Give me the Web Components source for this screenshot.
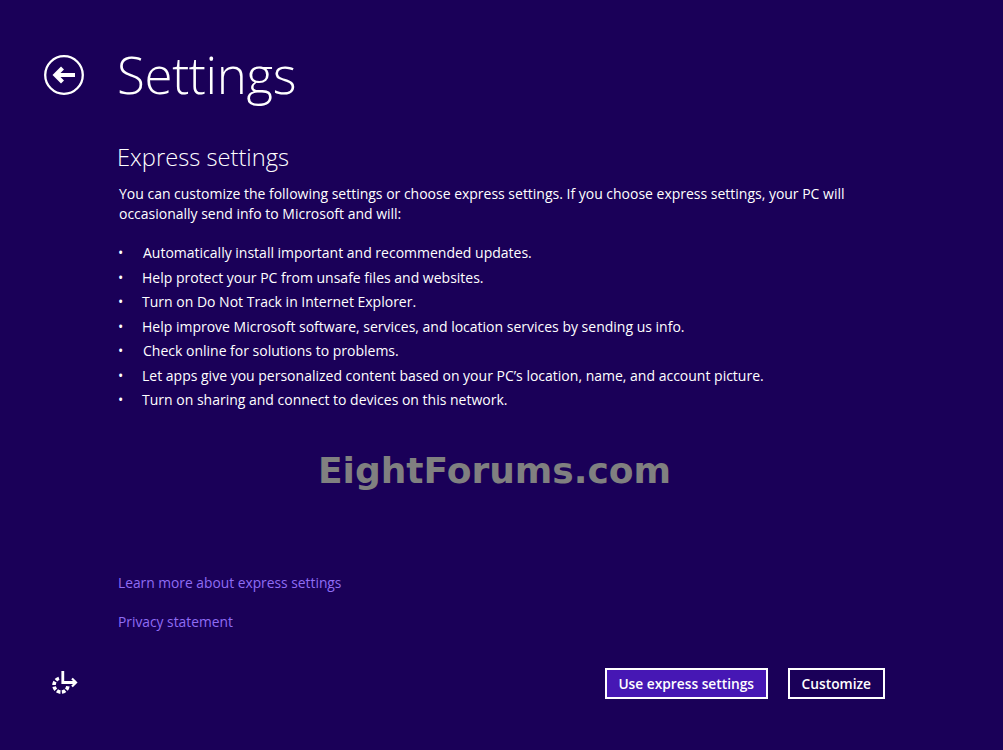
<!DOCTYPE html>
<html><head><meta charset="utf-8"><title>Settings</title>
<style>
html,body{margin:0;height:100%;background:#1a0058}
body{font-family:"Open Sans","Noto Sans",sans-serif;color:#fff;overflow:hidden}
</style></head><body>
<oobe-page>
<oobe-header slot="header" title-text="Settings"></oobe-header>
<h2-heading slot="main">Express settings</h2-heading>
<body-text slot="main">You can customize the following settings or choose express settings. If you choose express settings, your PC will<br>occasionally send info to Microsoft and will:</body-text>
<bullet-list slot="main">
<bullet-item indent="1">Automatically install important and recommended updates.</bullet-item>
<bullet-item>Help protect your PC from unsafe files and websites.</bullet-item>
<bullet-item>Turn on Do Not Track in Internet Explorer.</bullet-item>
<bullet-item>Help improve Microsoft software, services, and location services by sending us info.</bullet-item>
<bullet-item indent="1">Check online for solutions to problems.</bullet-item>
<bullet-item>Let apps give you personalized content based on your PC’s location, name, and account picture.</bullet-item>
<bullet-item>Turn on sharing and connect to devices on this network.</bullet-item>
</bullet-list>
<oobe-link slot="links">Learn more about express settings</oobe-link>
<oobe-link slot="links">Privacy statement</oobe-link>
<ease-icon slot="footer-left"></ease-icon>
<oobe-button slot="footer-right" primary>Use express settings</oobe-button>
<oobe-button slot="footer-right">Customize</oobe-button>
</oobe-page>
<script>
function def(name,html,init){
  customElements.define(name,class extends HTMLElement{
    constructor(){super();this.attachShadow({mode:'open'}).innerHTML=html;}
    connectedCallback(){if(init)init(this);}
  });
}
def('oobe-page',`<style>
:host{display:block;position:relative;width:1003px;height:750px;box-sizing:border-box;background:#1a0058}
.wrap{display:flex;flex-direction:column;height:100%;box-sizing:border-box;padding:0 118px 51px 0}
.main{padding-left:118px;display:flex;flex-direction:column}
.links{margin-top:auto;padding-left:118px;display:flex;flex-direction:column;gap:19px}
.foot{display:flex;align-items:center;justify-content:space-between;margin-top:36px;padding-left:51px}
.btns{display:flex;gap:20px}
.mark{position:absolute;left:318px;top:446.5px;font:bold 36px/48px "DejaVu Sans",sans-serif;color:#808080;white-space:nowrap}
</style><div class="wrap"><slot name="header"></slot><div class="main"><slot name="main"></slot></div>
<div class="links"><slot name="links"></slot></div>
<div class="foot"><slot name="footer-left"></slot><div class="btns"><slot name="footer-right"></slot></div></div></div>
<div class="mark">EightForums.com</div>`);
def('oobe-header',`<style>
:host{display:flex;align-items:center;height:92px;padding:29px 0 0 44px;box-sizing:content-box}
svg{width:40px;height:40px;display:block;flex:none;margin-top:0}
h1{margin:-3px 0 0 33px;font:300 51px/60px "Open Sans",sans-serif;color:#fff;letter-spacing:-.35px}
</style><svg viewBox="0 0 40 40" fill="none" stroke="#fff"><circle cx="20" cy="20" r="18.8" stroke-width="2.3"/><path d="M13 20H31" stroke-width="4"/><path d="M18.5 13L11.5 20L18.5 27" stroke-width="4.2"/></svg><h1></h1>`,
 el=>{el.shadowRoot.querySelector('h1').textContent=el.getAttribute('title-text');});
def('h2-heading',`<style>
:host{display:block;margin:20px 0 0 -1px;font:300 23.7px/32px "Open Sans",sans-serif;color:#fff}
</style><slot></slot>`);
def('body-text',`<style>
:host{display:block;margin:10.5px 0 0 1px;font:400 14px/20px "Open Sans",sans-serif;color:#fff;white-space:nowrap;letter-spacing:-.01px}
</style><slot></slot>`);
def('bullet-list',`<style>
:host{display:flex;flex-direction:column;margin-top:17.4px}
</style><slot></slot>`);
def('bullet-item',`<style>
:host{display:flex;height:24.5px;align-items:center;font:400 14px/20px "Open Sans",sans-serif;color:#fff;white-space:nowrap}
b{font-weight:400;width:24px;flex:none}
:host([indent]) b{width:25px}
</style><b>•</b><slot></slot>`);
def('oobe-link',`<style>
:host{display:block;font:400 13.8px/20px "Open Sans",sans-serif;color:#8f6cf4}
</style><slot></slot>`);
def('ease-icon',`<style>
:host{display:block;width:27px;height:27px}
svg{display:block}
</style><svg width="27" height="27" viewBox="0 0 27 27" fill="none" stroke="#fff"><path d="M8 8.4A7 7 0 1 0 17 15.5" stroke-width="3.6" stroke-dasharray="3.6 1.5"/><path d="M11.8 1V12.5H24.5" stroke-width="2.8"/><path d="M21 8.5L25 12.5L21 16.5" stroke-width="2.2"/></svg>`);
def('oobe-button',`<style>
:host{display:block;box-sizing:border-box;height:31px;padding:0 12px;border:2px solid #fff;background:#1a0058;font:600 13.75px/27px "Open Sans",sans-serif;color:#fff;white-space:nowrap}
:host([primary]){background:#4617b4;padding:0 11.5px}
</style><slot></slot>`);
</script>
</body></html>
